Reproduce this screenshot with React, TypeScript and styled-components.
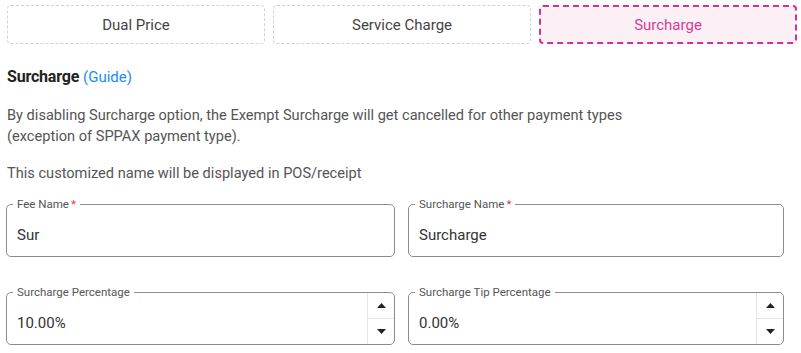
import React from "react";
import styled, { createGlobalStyle } from "styled-components";

const Global = createGlobalStyle`
  html, body { margin: 0; padding: 0; background: #fff; }
  body { font-family: Roboto, "Liberation Sans", Arial, sans-serif; color: #333; }
  * { box-sizing: border-box; }
`;

const Page = styled.div`
  width: 801px;
  padding: 5px 4px 0 6px;
`;

const Tabs = styled.div`
  display: grid;
  grid-template-columns: repeat(3, 258px);
  column-gap: 8px;
  padding-left: 1px;
`;

const Tab = styled.div<{ $active?: boolean }>`
  height: 39px;
  display: flex;
  align-items: center;
  justify-content: center;
  font-size: 15px;
  border-radius: 4px;
  border: ${(p) => (p.$active ? "2px dashed #d3328d" : "1px dashed #cfd3d8")};
  background: ${(p) => (p.$active ? "#fcf0f7" : "#fff")};
  color: ${(p) => (p.$active ? "#d63c96" : "#444")};
`;

const Heading = styled.div`
  margin-top: 23px;
  padding-left: 1px;
  display: flex;
  align-items: baseline;
  gap: 4px;
  line-height: 20px;
`;

const Title = styled.span`
  font-size: 16px;
  font-weight: 700;
  color: #222;
  letter-spacing: -0.2px;
`;

const Guide = styled.a`
  font-size: 15px;
  color: #1a8cff;
  text-decoration: none;
`;

const Para = styled.p<{ $mt: number }>`
  margin: ${(p) => p.$mt}px 0 0;
  padding-left: 1px;
  font-size: 14.6px;
  line-height: 21px;
  color: #555;
`;

const Grid = styled.div`
  margin-top: 20px;
  display: grid;
  grid-template-columns: 389px 376px;
  column-gap: 13px;
  row-gap: 35px;
`;

const Box = styled.div`
  position: relative;
  height: 53px;
  border: 1px solid #8c8c8c;
  border-radius: 5px;
  display: flex;
  align-items: stretch;
`;

const Label = styled.span`
  position: absolute;
  top: -7px;
  left: 6px;
  padding: 0 4px;
  background: #fff;
  font-size: 11.5px;
  line-height: 13px;
  color: #555;
`;

const Req = styled.span`
  color: #e53935;
  margin-left: 2px;
`;

const Value = styled.div`
  flex: 1;
  display: flex;
  align-items: center;
  padding: 8px 0 0 10px;
  font-size: 15px;
  color: #333;
`;

const Spinner = styled.div`
  width: 27px;
  border-left: 1px solid #e6e6e6;
  display: grid;
  grid-template-rows: 1fr 1fr;
`;

const SpinBtn = styled.div<{ $top?: boolean }>`
  display: flex;
  align-items: center;
  justify-content: center;
  border-bottom: ${(p) => (p.$top ? "1px solid #e6e6e6" : "none")};
`;

const Arrow = ({ up }: { up?: boolean }) => (
  <svg width="9" height="5" viewBox="0 0 9 5">
    <path d={up ? "M0 5 L4.5 0 L9 5 Z" : "M0 0 L4.5 5 L9 0 Z"} fill="#222" />
  </svg>
);

const Field = ({
  label,
  value,
  required,
  spinner,
}: {
  label: string;
  value: string;
  required?: boolean;
  spinner?: boolean;
}) => (
  <Box>
    <Label>
      {label}
      {required && <Req>*</Req>}
    </Label>
    <Value>{value}</Value>
    {spinner && (
      <Spinner>
        <SpinBtn $top>
          <Arrow up />
        </SpinBtn>
        <SpinBtn>
          <Arrow />
        </SpinBtn>
      </Spinner>
    )}
  </Box>
);

export default function App() {
  return (
    <Page>
      <Global />
      <Tabs>
        <Tab>Dual Price</Tab>
        <Tab>Service Charge</Tab>
        <Tab $active>Surcharge</Tab>
      </Tabs>
      <Heading>
        <Title>Surcharge</Title>
        <Guide href="#">(Guide)</Guide>
      </Heading>
      <Para $mt={18}>
        By disabling Surcharge option, the Exempt Surcharge will get cancelled for other payment types
        <br />
        (exception of SPPAX payment type).
      </Para>
      <Para $mt={16}>This customized name will be displayed in POS/receipt</Para>
      <Grid>
        <Field label="Fee Name" value="Sur" required />
        <Field label="Surcharge Name" value="Surcharge" required />
        <Field label="Surcharge Percentage" value="10.00%" spinner />
        <Field label="Surcharge Tip Percentage" value="0.00%" spinner />
      </Grid>
    </Page>
  );
}
